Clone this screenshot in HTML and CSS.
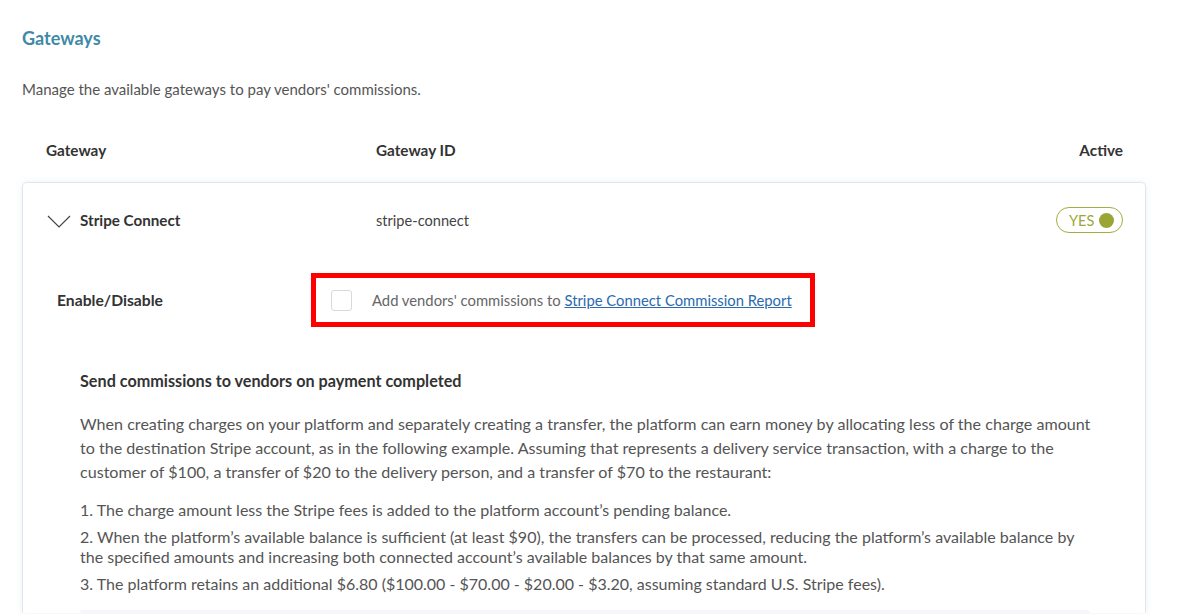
FILE: index.html
```html
<!DOCTYPE html>
<html>
<head>
<meta charset="utf-8">
<link rel="stylesheet" href="styles.css">
</head>
<body>
<div class="page">
  <h2 class="title">Gateways</h2>
  <p class="desc">Manage the available gateways to pay vendors' commissions.</p>
  <div class="thead">
    <div>Gateway</div>
    <div>Gateway ID</div>
    <div class="right">Active</div>
  </div>
  <div class="card">
    <div class="row">
      <div class="name">
        <svg class="chev" width="24" height="14" viewBox="0 0 24 14"><path d="M1 1 L12 12 L23 1" fill="none" stroke="#444" stroke-width="1.2"/></svg>
        <span>Stripe Connect</span>
      </div>
      <div class="gid">stripe-connect</div>
      <div class="right"><span class="toggle"><span class="tlabel">YES</span><span class="dot"></span></span></div>
    </div>
    <div class="enable">
      <div class="elabel">Enable/Disable</div>
      <div class="highlight">
        <span class="check"></span>
        <span class="ctext">Add vendors' commissions to <a href="#">Stripe Connect Commission Report</a></span>
      </div>
    </div>
    <div class="section">
      <h3 class="stitle">Send commissions to vendors on payment completed</h3>
      <p class="para">When creating charges on your platform and separately creating a transfer, the platform can earn money by allocating less of the charge amount to the destination Stripe account, as in the following example. Assuming that represents a delivery service transaction, with a charge to the customer of $100, a transfer of $20 to the delivery person, and a transfer of $70 to the restaurant:</p>
      <ol class="list">
        <li>1. The charge amount less the Stripe fees is added to the platform account’s pending balance.</li>
        <li>2. When the platform’s available balance is sufficient (at least $90), the transfers can be processed, reducing the platform’s available balance by the specified amounts and increasing both connected account’s available balances by that same amount.</li>
        <li>3. The platform retains an additional $6.80 ($100.00 - $70.00 - $20.00 - $3.20, assuming standard U.S. Stripe fees).</li>
      </ol>
      <div class="box"></div>
    </div>
  </div>
</div>
</body>
</html>
```

FILE: styles.css
```css
* { box-sizing: border-box; }
html, body { margin: 0; padding: 0; background: #fff; }
body {
  font-family: "Lato", "Open Sans", sans-serif;
  color: #555;
  font-size: 15px;
  overflow: hidden;
  height: 614px;
}
.page { padding: 26px 46px 0 22px; }
.title {
  margin: 0;
  font-size: 18px;
  line-height: 24px;
  font-weight: 700;
  color: #3f8aa7;
}
.desc {
  margin: 29px 0 0;
  line-height: 20px;
  font-size: 15px;
  color: #555;
}
.thead {
  display: grid;
  grid-template-columns: 330px 1fr auto;
  padding: 0 23px 0 24px;
  margin-top: 41px;
  line-height: 20px;
  font-weight: 700;
  color: #333;
  font-size: 15.3px;
}
.right { text-align: right; }
.card {
  margin-top: 22px;
  border: 1px solid #dfe6ee;
  border-bottom: none;
  border-radius: 5px 5px 0 0;
  box-shadow: 0 0 6px rgba(180, 200, 220, 0.25);
  height: 431px;
  overflow: hidden;
}
.row {
  display: grid;
  grid-template-columns: 329px 1fr auto;
  align-items: center;
  padding: 24px 22px 0 24px;
  height: 50px;
}
.name {
  display: flex;
  align-items: center;
  gap: 9px;
  font-weight: 700;
  color: #333;
  font-size: 15.2px;
}
.chev { display: block; margin-top: 3px; }
.gid { color: #444; font-size: 14.6px; }
.toggle {
  display: inline-flex;
  align-items: center;
  height: 26px;
  width: 67px;
  border: 1px solid #a3ae3e;
  border-radius: 13px;
  padding: 0 8px 0 12px;
  justify-content: space-between;
}
.tlabel { color: #9ca83c; font-size: 14.5px; font-weight: 400; }
.dot {
  width: 15px; height: 15px;
  border-radius: 50%;
  background: #9aa534;
}
.enable {
  display: flex;
  align-items: center;
  margin-top: 40px;
  padding-left: 34px;
}
.elabel {
  width: 254px;
  font-weight: 700;
  color: #333;
  font-size: 15.7px;
}
.highlight {
  display: flex;
  align-items: center;
  width: 504px;
  height: 54px;
  border: 5px solid #f00;
  padding-left: 15px;
}
.check {
  width: 21px; height: 21px;
  border: 1px solid #d9d9d9;
  border-radius: 3px;
  background: #fff;
  margin-right: 20px;
}
.ctext { color: #666; font-size: 14.8px; }
.ctext a { color: #2b6aae; text-decoration: underline; }
.section { padding: 0 40px 0 57px; margin-top: 42px; }
.stitle {
  margin: 0;
  font-size: 16.2px;
  line-height: 24px;
  font-weight: 700;
  color: #333;
}
.para {
  margin: 19px 0 0;
  font-size: 16.1px;
  line-height: 24px;
  color: #555;
}
.list {
  list-style: none;
  margin: 16px 20px 0 0;
  padding: 0;
  font-size: 16px;
  line-height: 20px;
}
.list li { margin-bottom: 7px; }
.box {
  margin-top: 16px;
  margin-right: 15px;
  height: 20px;
  background: #f5f7fa;
  border-radius: 3px;
}
```
